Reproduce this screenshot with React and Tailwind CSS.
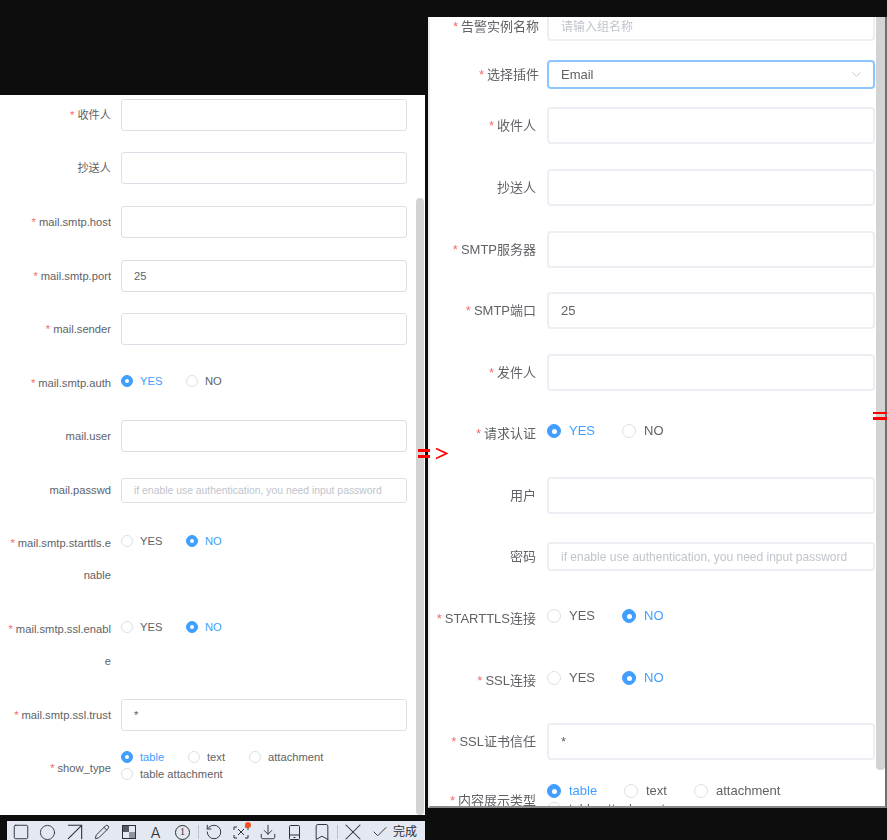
import { ArrowUpRight, Bookmark, Check, ChevronDown, Circle, Download, Pencil, RotateCcw, Square, X } from "lucide-react";

const fontStack = "font-['Liberation_Sans','Noto_Sans_CJK_SC',sans-serif]";

const leftRows = [
  { label: "收件人", req: true, type: "input", gap: "mt-[4px]" },
  { label: "抄送人", type: "input", gap: "mt-[21px]" },
  { label: "mail.smtp.host", req: true, type: "input", gap: "mt-[22px]" },
  { label: "mail.smtp.port", req: true, type: "input", value: "25", gap: "mt-[22px]" },
  { label: "mail.sender", req: true, type: "input", gap: "mt-[21px]" },
  { label: "mail.smtp.auth", req: true, type: "radio", on: "YES", gap: "mt-[24px]" },
  { label: "mail.user", type: "input", gap: "mt-[27px]" },
  { label: "mail.passwd", type: "small", placeholder: "if enable use authentication, you need input password", gap: "mt-[26px]" },
  { label: "mail.smtp.starttls.e", tail: "nable", req: true, type: "radio", on: "NO", gap: "mt-[24px]" },
  { label: "mail.smtp.ssl.enabl", tail: "e", req: true, type: "radio", on: "NO", gap: "mt-[22px]" },
  { label: "mail.smtp.ssl.trust", req: true, type: "input", value: "*", gap: "mt-[22px]" },
];

const rightRows = [
  { label: "告警实例名称", type: "small", placeholder: "请输入组名称", gap: "-mt-[5px]", wide: true },
  { label: "选择插件", type: "select", gap: "mt-[19px]", wide: true },
  { label: "收件人", type: "input", gap: "mt-[18px]" },
  { label: "抄送人", plain: true, type: "input", gap: "mt-[25px]" },
  { label: "SMTP服务器", type: "input", gap: "mt-[25px]" },
  { label: "SMTP端口", type: "input", value: "25", gap: "mt-[24px]" },
  { label: "发件人", type: "input", gap: "mt-[25px]" },
  { label: "请求认证", type: "radio", on: "YES", gap: "mt-[28px]" },
  { label: "用户", plain: true, type: "input", gap: "mt-[34px]" },
  { label: "密码", plain: true, type: "small", placeholder: "if enable use authentication, you need input password", gap: "mt-[28px]" },
  { label: "STARTTLS连接", type: "radio", on: "NO", gap: "mt-[33px]" },
  { label: "SSL连接", type: "radio", on: "NO", gap: "mt-[38px]" },
  { label: "SSL证书信任", type: "input", value: "*", gap: "mt-[33px]" },
];

function Dot({ on, big }) {
  const size = big ? "h-[14px] w-[14px]" : "h-[12px] w-[12px]";
  const inner = big ? "h-[5px] w-[5px]" : "h-[4px] w-[4px]";
  return (
    <span className={`flex shrink-0 items-center justify-center rounded-full border ${size} ${on ? "border-[#409eff] bg-[#409eff]" : "border-[#dcdfe6] bg-white"}`}>
      {on && <span className={`rounded-full bg-white ${inner}`} />}
    </span>
  );
}

function Radio({ text, on, big, boxClass }) {
  return (
    <span className={`flex items-center ${boxClass}`}>
      <Dot on={on} big={big} />
      <span className={`${big ? "ml-[8px] text-[13px]" : "ml-[7px] text-[11.2px]"} ${on ? "text-[#409eff]" : "text-[#606266]"}`}>{text}</span>
    </span>
  );
}

function LeftRow({ row }) {
  const isTwoLine = Boolean(row.tail);
  return (
    <div className={`flex ${row.gap} ${isTwoLine ? "h-[64px] items-start" : row.type === "radio" ? "h-[24px] items-center" : "items-center"}`}>
      <div className={`w-[111px] shrink-0 text-right text-[11.2px] text-[#606266] ${isTwoLine ? "leading-[32px]" : row.type === "radio" ? "pt-[4px]" : ""}`}>
        {row.req && <span className="mr-[3px] text-[#f56c6c]">*</span>}
        {row.label}
        {row.tail && <br />}
        {row.tail}
      </div>
      <div className="ml-[10px] w-[286px]">
        {row.type === "input" && (
          <div className="flex h-[32px] items-center rounded-[3px] border border-[#dcdfe6] pl-[12px] text-[11.2px] text-[#606266]">{row.value}</div>
        )}
        {row.type === "small" && (
          <div className="flex h-[25px] items-center rounded-[3px] border border-[#dcdfe6] pl-[12px] text-[10.4px] text-[#c0c4cc]">{row.placeholder}</div>
        )}
        {row.type === "radio" && (
          <div className={`flex items-center ${isTwoLine ? "mt-[6px]" : ""}`}>
            <Radio text="YES" on={row.on === "YES"} boxClass="w-[65px]" />
            <Radio text="NO" on={row.on === "NO"} />
          </div>
        )}
      </div>
    </div>
  );
}

function RightRow({ row }) {
  return (
    <div className={`flex ${row.gap} ${row.type === "radio" ? "h-[24px] items-center" : "items-center"}`}>
      <div className={`shrink-0 text-right text-[13px] text-[#606266] ${row.wide ? "w-[111px]" : "w-[108px]"} ${row.type === "radio" ? "pt-[5px]" : ""}`}>
        {!row.plain && <span className="mr-[3px] text-[#f56c6c]">*</span>}
        {row.label}
      </div>
      <div className={`w-[328px] ${row.wide ? "ml-[8px]" : "ml-[11px]"}`}>
        {row.type === "input" && (
          <div className="flex h-[37px] items-center rounded-[4px] border-2 border-[#eceef3] pl-[12px] text-[13px] text-[#606266]">{row.value}</div>
        )}
        {row.type === "small" && (
          <div className="flex h-[29px] items-center rounded-[4px] border-2 border-[#eceef3] pl-[12px] text-[12px] text-[#c0c4cc]">{row.placeholder}</div>
        )}
        {row.type === "select" && (
          <div className="flex h-[29px] items-center justify-between rounded-[4px] border-2 border-[#8cc5ff] pl-[12px] pr-[9px] text-[13px] text-[#606266]">
            Email
            <ChevronDown size={15} strokeWidth={1.5} className="text-[#c0c4cc]" />
          </div>
        )}
        {row.type === "radio" && (
          <div className="flex items-center">
            <Radio big text="YES" on={row.on === "YES"} boxClass="w-[75px]" />
            <Radio big text="NO" on={row.on === "NO"} />
          </div>
        )}
      </div>
    </div>
  );
}

function ToolSlot({ children }) {
  return <span className="flex h-[18px] w-[27px] shrink-0 items-center justify-center">{children}</span>;
}

function Toolbar() {
  const icon = { size: 18, strokeWidth: 1.25, className: "shrink-0" };
  return (
    <div className="ml-[7px] mt-[6px] flex h-[19px] w-[418px] items-start overflow-hidden bg-[#e4e8f1] pt-[2px] text-[#2b2f38]">
      <ToolSlot><Square {...icon} /></ToolSlot>
      <ToolSlot><Circle {...icon} size={17} /></ToolSlot>
      <ToolSlot><ArrowUpRight size={32} strokeWidth={0.8} className="shrink-0" /></ToolSlot>
      <ToolSlot><Pencil size={16} strokeWidth={1.4} className="shrink-0" /></ToolSlot>
      <ToolSlot>
        <svg width="14" height="14" viewBox="0 0 14 14">
          <rect x="0.5" y="0.5" width="13" height="13" fill="none" stroke="#2b2f38" />
          <rect x="1" y="1" width="6" height="6" fill="#555a66" />
          <rect x="7" y="7" width="6" height="6" fill="#8d93a0" />
        </svg>
      </ToolSlot>
      <ToolSlot><span className="font-['Inter',sans-serif] text-[15px] font-light leading-[15px]">A</span></ToolSlot>
      <ToolSlot>
        <span className="flex h-[15px] w-[15px] items-center justify-center rounded-full border border-[#2b2f38] font-['Liberation_Serif',serif] text-[10px] leading-none">1</span>
      </ToolSlot>
      <span className="ml-[2px] mt-[2px] h-[14px] w-px shrink-0 bg-[#b9bec9]" />
      <span className="ml-[1px] flex shrink-0">
        <ToolSlot><RotateCcw {...icon} /></ToolSlot>
        <ToolSlot>
          <span className="relative">
            <svg width="16" height="15" viewBox="0 0 16 15" fill="none" stroke="#2b2f38" strokeWidth="1" className="block">
              <path d="M1 5V2h3M12 2h3v3M15 10v3h-3M4 13H1v-3M5 4l6 6M11 4l-6 6" />
            </svg>
            <span className="absolute -right-[2px] -top-[3px] h-[6px] w-[6px] rounded-full bg-[#f4511e]" />
          </span>
        </ToolSlot>
        <ToolSlot><Download {...icon} /></ToolSlot>
        <ToolSlot>
          <svg width="11" height="15" viewBox="0 0 11 15" fill="none" stroke="#2b2f38" strokeWidth="1">
            <rect x="0.5" y="0.5" width="10" height="14" rx="1" />
            <path d="M0.5 10h10M4.5 12.5h2" />
          </svg>
        </ToolSlot>
        <ToolSlot><Bookmark {...icon} size={20} strokeWidth={1.15} /></ToolSlot>
      </span>
      <span className="ml-[2px] mt-[2px] h-[14px] w-px shrink-0 bg-[#b9bec9]" />
      <span className="ml-[1px] flex shrink-0">
        <ToolSlot><X size={28} strokeWidth={0.9} className="shrink-0" /></ToolSlot>
        <ToolSlot><Check {...icon} /></ToolSlot>
      </span>
      <span className="pt-[1px] text-[12px] leading-[16px]">完成</span>
    </div>
  );
}

export default function App() {
  return (
    <div className={`relative flex h-[840px] w-[887px] items-start overflow-hidden bg-[#0d0d0d] ${fontStack}`}>
      <div className="w-[425px] shrink-0 pt-[95px]">
        <div className="relative flow-root h-[720px] bg-white">
          {leftRows.map((row) => (
            <LeftRow key={row.label} row={row} />
          ))}
          <div className="mt-[18px] flex items-center">
            <div className="w-[111px] shrink-0 pt-[4px] text-right text-[11.2px] text-[#606266]">
              <span className="mr-[3px] text-[#f56c6c]">*</span>show_type
            </div>
            <div className="ml-[10px]">
              <div className="flex h-[17px] items-center">
                <Radio on text="table" boxClass="w-[67px]" />
                <Radio text="text" boxClass="w-[61px]" />
                <Radio text="attachment" />
              </div>
              <div className="flex h-[17px] items-center">
                <Radio text="table attachment" />
              </div>
            </div>
          </div>
          <div className="absolute left-[416px] top-[103px] h-[617px] w-[8px] rounded-[4px] bg-[#d3d3d3]" />
        </div>
        <Toolbar />
      </div>

      <div className="relative ml-[3px] mt-[17px] h-[791px] w-[459px] shrink-0 overflow-hidden border-b-2 border-l-2 border-r-2 border-b-[#8a8a8a] border-l-[#eceef5] border-r-[#6f6f6f] bg-white">
        <div className="-ml-[2px] blur-[0.6px]">
          {rightRows.map((row) => (
            <RightRow key={row.label} row={row} />
          ))}
          <div className="mt-[22px] flex items-center">
            <div className="w-[108px] shrink-0 pt-[2px] text-right text-[13px] text-[#606266]">
              <span className="mr-[3px] text-[#f56c6c]">*</span>内容展示类型
            </div>
            <div className="ml-[11px]">
              <div className="flex h-[18px] items-center">
                <Radio big on text="table" boxClass="w-[77px]" />
                <Radio big text="text" boxClass="w-[70px]" />
                <Radio big text="attachment" />
              </div>
              <div className="flex h-[18px] items-center">
                <Radio big text="table attachment" />
              </div>
            </div>
          </div>
        </div>
        <div className="absolute right-[0px] top-0 h-[753px] w-[9px] rounded-b-[4px] bg-[#d3d3d3]" />
      </div>

      <span className="absolute left-[418px] top-[449px] h-[3px] w-[12px] bg-[#ff0000]" />
      <span className="absolute left-[418px] top-[455px] h-[3px] w-[12px] bg-[#ff0000]" />
      <svg width="13" height="13" viewBox="0 0 13 13" className="absolute left-[435px] top-[447px]" fill="none" stroke="#ff0000" strokeWidth="1.6">
        <path d="M1 1.5 L11.5 6.5 L1 11.5" />
      </svg>
      <span className="absolute left-[873px] top-[412px] h-[2px] w-[14px] bg-[#ff0000]" />
      <span className="absolute left-[873px] top-[417px] h-[3px] w-[14px] bg-[#ff0000]" />
    </div>
  );
}
